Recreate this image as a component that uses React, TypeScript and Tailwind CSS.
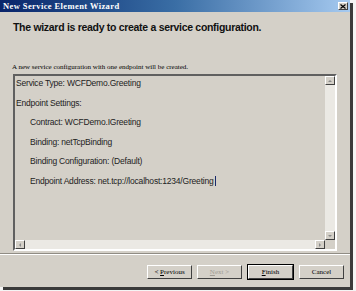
import React from 'react'

const lines = [
  { text: 'Service Type: WCFDemo.Greeting', indent: false },
  { text: 'Endpoint Settings:', indent: false },
  { text: 'Contract: WCFDemo.IGreeting', indent: true },
  { text: 'Binding: netTcpBinding', indent: true },
  { text: 'Binding Configuration: (Default)', indent: true },
  { text: 'Endpoint Address: net.tcp://localhost:1234/Greeting', indent: true, caret: true },
]

function ScrollArrow({ dir }: { dir: 'up' | 'down' | 'left' | 'right' }) {
  const pts = {
    up: '2,5 4,3 6,5',
    down: '2,3 4,5 6,3',
    left: '5,2 3,4 5,6',
    right: '3,2 5,4 3,6',
  }[dir]
  return (
    <div className="w-[10px] h-[9px] bg-[#d4d0c8] border border-t-white border-l-white border-r-[#404040] border-b-[#404040] flex items-center justify-center">
      <svg width="8" height="8" viewBox="0 0 8 8">
        <polygon points={pts} fill="#8a8a8a" />
      </svg>
    </div>
  )
}

function WinButton({ label, under, disabled, isDefault }: { label: string; under?: number; disabled?: boolean; isDefault?: boolean }) {
  const chars = label.split('')
  return (
    <div
      className={
        'w-[45px] h-[14px] bg-[#d4d0c8] flex items-center justify-center ' +
        (isDefault ? 'outline outline-1 outline-black ' : '') +
        'border border-t-white border-l-white border-r-[#404040] border-b-[#404040]'
      }
    >
      <span
        className={'text-[7px] leading-none ' + (disabled ? 'text-[#a09c94]' : 'text-black')}
        style={{ fontFamily: '"Liberation Serif", serif' }}
      >
        {chars.map((c, i) => (
          <span key={i} className={i === under ? 'underline' : ''}>
            {c}
          </span>
        ))}
      </span>
    </div>
  )
}

export default function App() {
  return (
    <div className="w-[356px] h-[291px] bg-[#f4f4f4] overflow-hidden">
      <div className="w-[350px] h-[287px] bg-[#d4d0c8] flex flex-col shadow-[3px_3px_0_#3a3a3a]">
        {/* title bar */}
        <div className="h-[12px] bg-gradient-to-r from-[#0a246a] via-[#3a6ea5] to-[#a6caf0] flex items-center justify-between pl-[3px] pr-[2px]">
          <span
            className="text-[8.5px] font-bold text-white leading-none tracking-[0.4px]"
            style={{ fontFamily: '"Liberation Serif", serif' }}
          >
            New Service Element Wizard
          </span>
          <div className="w-[10px] h-[8px] bg-[#d4d0c8] border border-t-white border-l-white border-r-[#404040] border-b-[#404040] flex items-center justify-center">
            <svg width="6" height="5" viewBox="0 0 6 5">
              <path d="M0.5 0.5 L5.5 4.5 M5.5 0.5 L0.5 4.5" stroke="black" strokeWidth="1.2" />
            </svg>
          </div>
        </div>

        {/* header */}
        <div className="pl-[13px] pt-[9px] h-[38px]">
          <div
            className="text-[10.5px] font-bold text-[#111] leading-[13px] tracking-[-0.3px]"
            style={{ fontFamily: '"Liberation Sans", Arial, sans-serif' }}
          >
            The wizard is ready to create a service configuration.
          </div>
        </div>

        <div
          className="pl-[12px] h-[24px] pt-[13px] text-[7px] leading-[8px] text-black"
          style={{ fontFamily: '"Liberation Serif", serif' }}
        >
          A new service configuration with one endpoint will be created.
        </div>

        {/* text box */}
        <div className="ml-[13px] w-[324px] h-[177px] border-2 border-t-[#606060] border-l-[#606060] border-r-white border-b-white flex flex-col">
          <div className="flex flex-1 min-h-0">
            <div
              className="flex-1 flex flex-col gap-[7.6px] pt-[1px] pl-[1px] text-[8.5px] leading-[12px] tracking-[-0.2px] text-[#222]"
              style={{ fontFamily: '"Liberation Sans", Arial, sans-serif' }}
            >
              {lines.map((l, i) => (
                <div key={i} className={'flex items-center whitespace-nowrap ' + (l.indent ? 'pl-[14px]' : '')}>
                  {l.text}
                  {l.caret && <span className="inline-block w-[1px] h-[10px] bg-[#1a2a6a] ml-[1px]" />}
                </div>
              ))}
            </div>
            <div className="w-[10px] bg-[#ebe9e4] flex flex-col justify-between">
              <ScrollArrow dir="up" />
              <ScrollArrow dir="down" />
            </div>
          </div>
          <div className="h-[9px] flex">
            <div className="flex-1 bg-[#ebe9e4] flex justify-between">
              <ScrollArrow dir="left" />
              <ScrollArrow dir="right" />
            </div>
            <div className="w-[10px] bg-[#d4d0c8]" />
          </div>
        </div>

        {/* separator */}
        <div className="mt-[2px] h-[2px] border-t border-t-[#908c84] border-b border-b-white" />

        {/* buttons */}
        <div className="flex pl-[147px] pt-[10px] gap-[5px]">
          <WinButton label="< Previous" under={2} />
          <WinButton label="Next >" under={0} disabled />
          <div className="ml-[1px]">
            <WinButton label="Finish" under={0} isDefault />
          </div>
          <div className="ml-[1px]">
            <WinButton label="Cancel" />
          </div>
        </div>
      </div>
    </div>
  )
}
